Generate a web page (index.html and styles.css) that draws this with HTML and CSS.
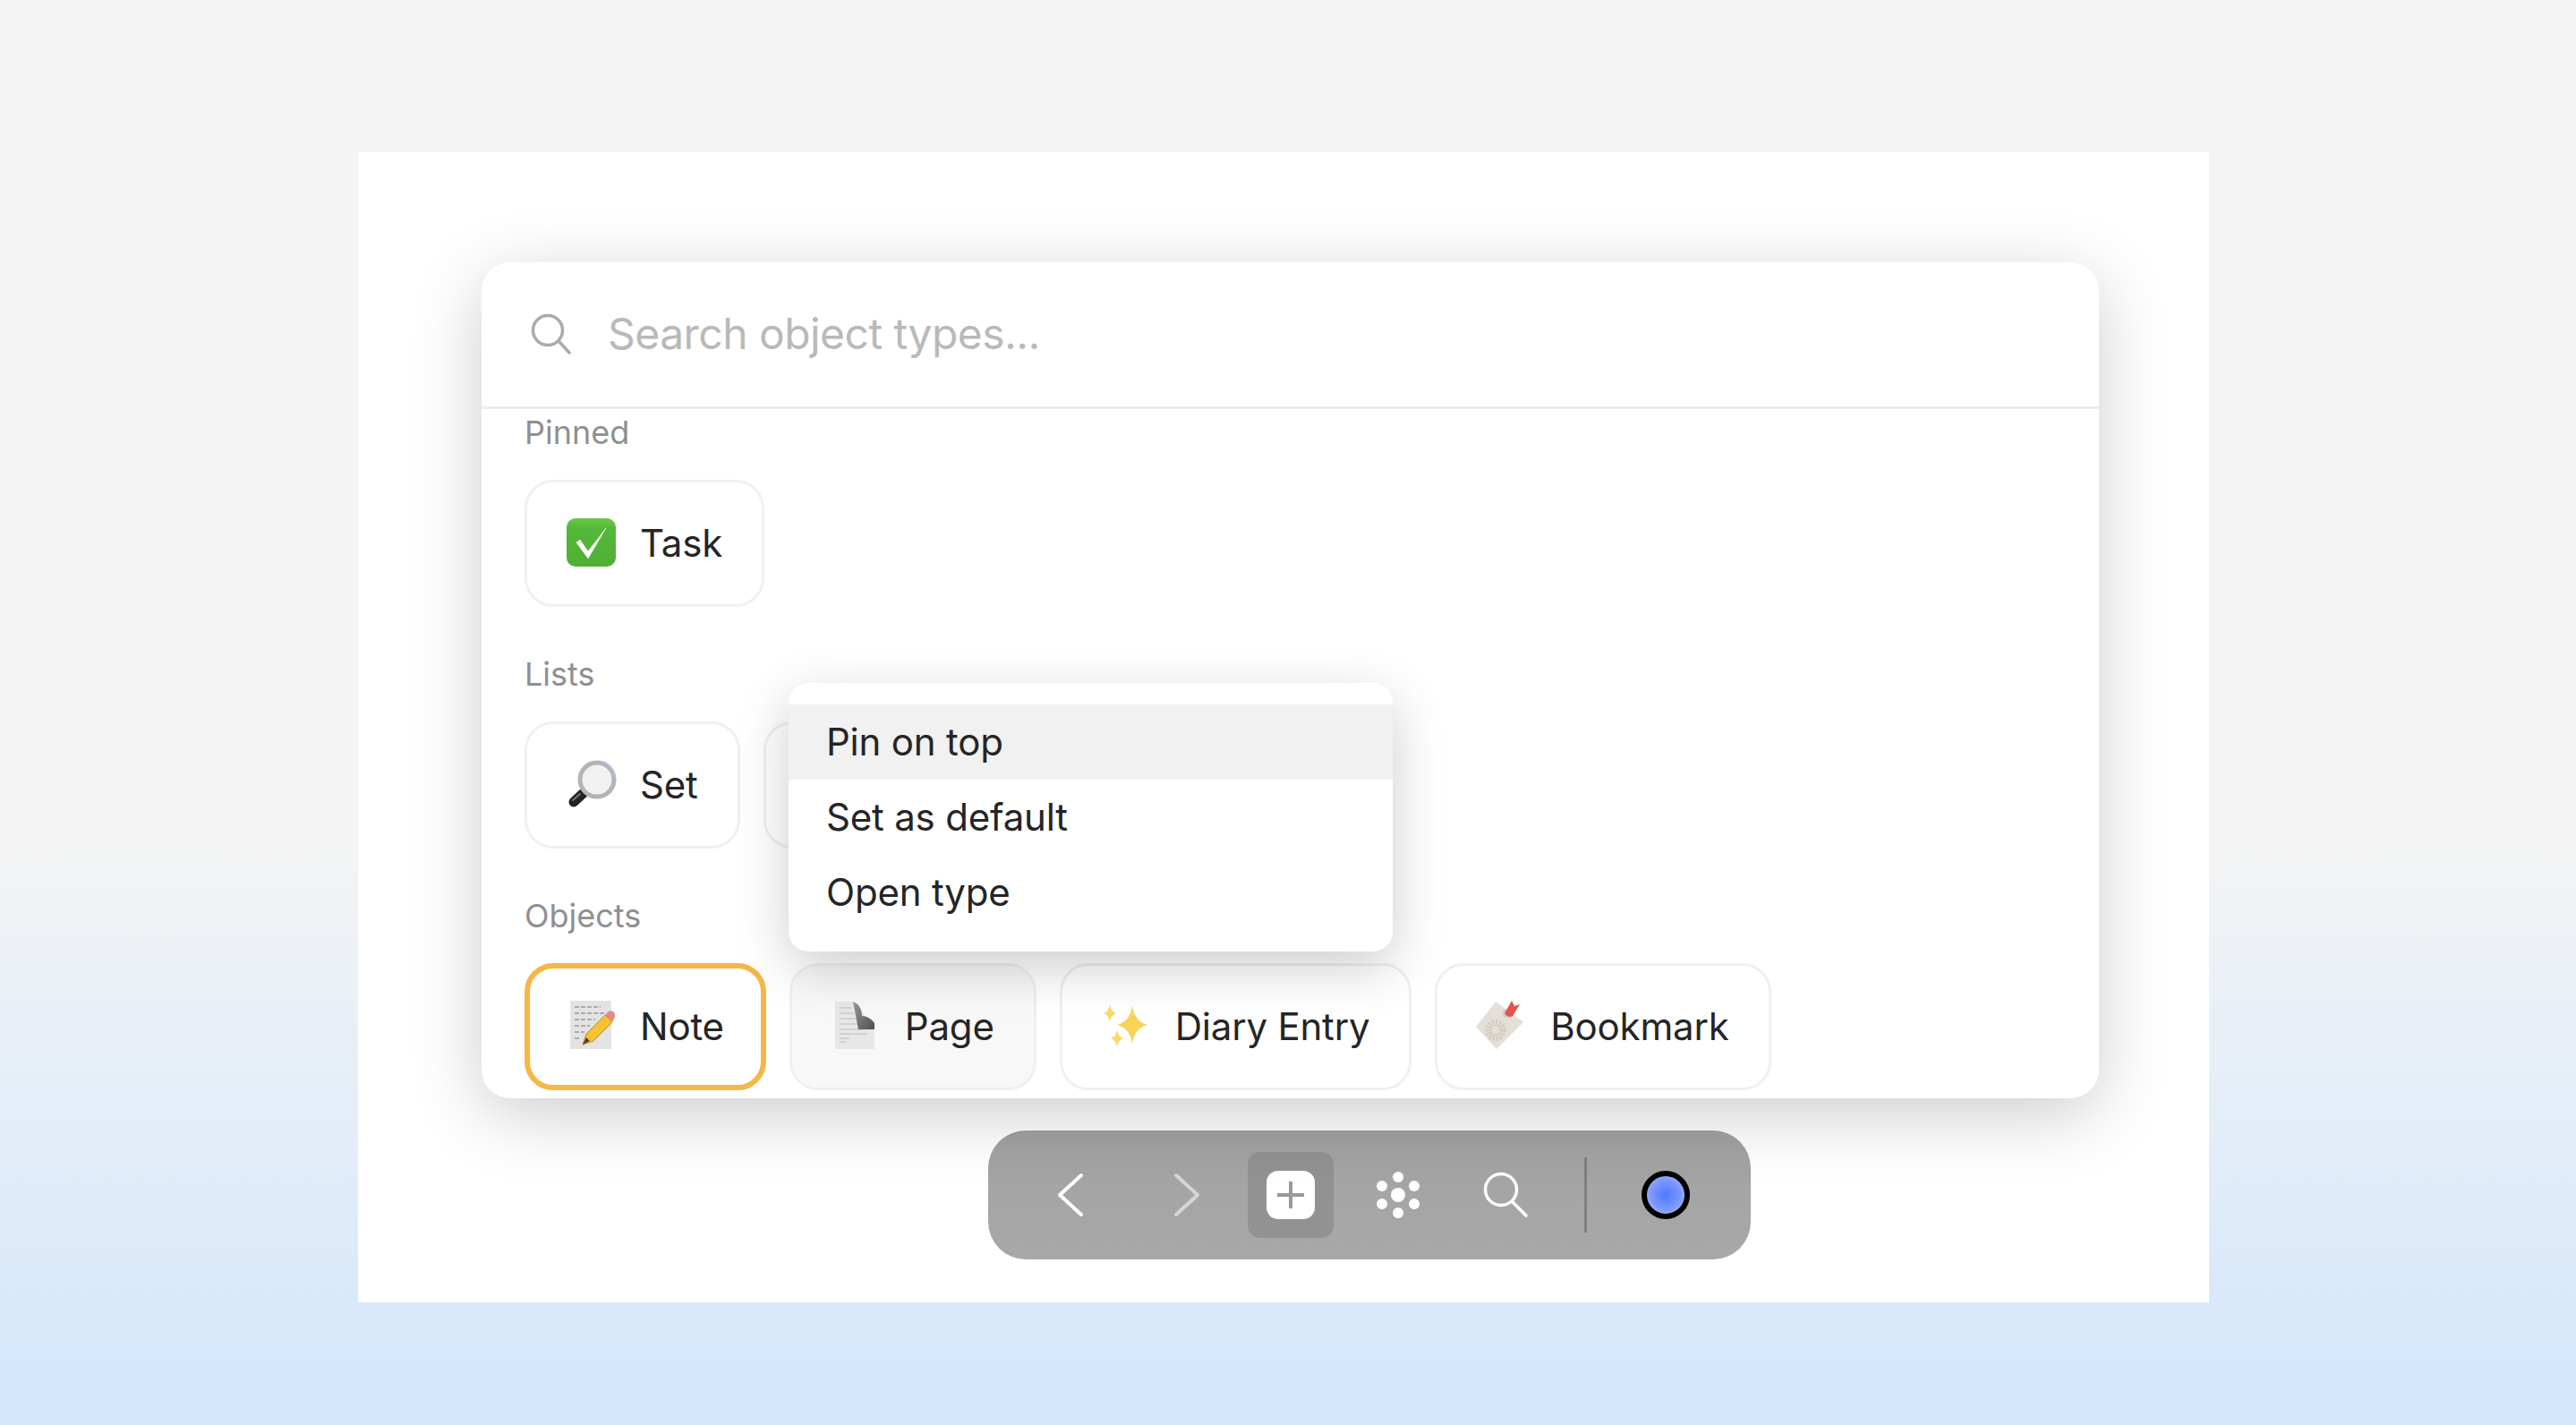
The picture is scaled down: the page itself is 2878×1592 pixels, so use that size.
FILE: index.html
```html
<!DOCTYPE html>
<html lang="en">
<head>
    <meta charset="UTF-8">
    <meta name="viewport" content="width=device-width, initial-scale=1.0">
    <title>Object types</title>
    <link rel="stylesheet" href="styles.css">
</head>
<body>
    <div class="frame">
        <div class="card">
            <!-- Search -->
            <div class="search">
                <svg class="search-icon" width="46" height="46" viewBox="0 0 46 46">
                    <circle cx="20" cy="19" r="16.5" fill="none" stroke="#ababab" stroke-width="3.5"/>
                    <path d="M32 31 L44 44" stroke="#ababab" stroke-width="3.5" stroke-linecap="round"/>
                </svg>
                <span class="search-text">Search object types...</span>
            </div>

            <div class="types">
                <div class="label">Pinned</div>
                <div class="row">
                    <div class="pill">
                        <svg class="emoji" viewBox="0 0 58 58">
                            <defs>
                                <linearGradient id="checkBg" x1="0" y1="0" x2="0" y2="1">
                                    <stop offset="0" stop-color="#6cc64c"/>
                                    <stop offset="0.2" stop-color="#54b838"/>
                                    <stop offset="1" stop-color="#4fb034"/>
                                </linearGradient>
                            </defs>
                            <rect x="2" y="2" width="55" height="54" rx="10" fill="url(#checkBg)"/>
                            <path d="M13 29 L17 26 L26 39 L46 13 L26 47 Z" fill="#fff" stroke="#fff" stroke-width="0.5" stroke-linejoin="round"/>
                        </svg>
                        <span>Task</span>
                    </div>
                </div>

                <div class="label">Lists</div>
                <div class="row">
                    <div class="pill">
                        <svg class="emoji" viewBox="0 0 58 58">
                            <path d="M24 36 L10 49" stroke="#222" stroke-width="11" stroke-linecap="round"/>
                            <path d="M9 47 L17 40" stroke="#777" stroke-width="2" stroke-linecap="round"/>
                            <circle cx="36" cy="24" r="19" fill="#f1f1f1" stroke="#b4b4b4" stroke-width="5"/>
                            <path d="M42 4 A21 21 0 0 1 56 22" fill="none" stroke="#a9bfe6" stroke-width="2"/>
                        </svg>
                        <span>Set</span>
                    </div>
                    <div class="pill pill-hidden"></div>
                </div>

                <div class="label">Objects</div>
                <div class="row">
                    <div class="pill pill-selected">
                        <svg class="emoji" viewBox="0 0 58 58">
                            <rect x="6" y="1" width="46" height="54" fill="#e3e3e3"/>
                            <path d="M11 8 H40 M11 15 H44 M11 22 H34 M11 29 H28 M11 36 H22 M11 43 H18" stroke="#9a9a9a" stroke-width="1.6" stroke-dasharray="5 2"/>
                            <path d="M20 50 L24 38 L45 17 L53 25 L32 46 Z" fill="#f4c232" stroke="#c8901c" stroke-width="1"/>
                            <path d="M20 50 L24 42 L28 46 Z" fill="#4a4034"/>
                            <path d="M45 17 L49 13 Q52 11 55 14 Q57 17 55 21 L53 25 Z" fill="#e58a80"/>
                        </svg>
                        <span>Note</span>
                    </div>
                    <div class="pill pill-hover">
                        <svg class="emoji" viewBox="0 0 58 58">
                            <defs>
                                <linearGradient id="foldBg" x1="0" y1="0" x2="1" y2="1">
                                    <stop offset="0" stop-color="#9a9a9a"/>
                                    <stop offset="1" stop-color="#505050"/>
                                </linearGradient>
                            </defs>
                            <path d="M6 2 H28 L50 32 V55 H6 Z" fill="#e7e7e7"/>
                            <path d="M11 9 H24 M11 15 H27 M11 21 H30 M11 27 H32 M11 33 H40 M11 38 H42 M11 43 H22 M11 47 H18" stroke="#cbcbcb" stroke-width="1.6"/>
                            <path d="M26 2 Q36 6 36 18 Q44 18 50 26 V33 H32 Z" fill="url(#foldBg)"/>
                        </svg>
                        <span>Page</span>
                    </div>
                    <div class="pill">
                        <svg class="emoji" viewBox="0 0 58 58">
                            <path d="M36 6 Q38 24 53 28 Q38 32 36 50 Q34 32 19 28 Q34 24 36 6 Z" fill="#f8d458"/>
                            <path d="M11 5 Q12 13 18 15 Q12 17 11 25 Q10 17 4 15 Q10 13 11 5 Z" fill="#f9d968"/>
                            <path d="M19 33 Q20 41 26 43 Q20 45 19 53 Q18 45 12 43 Q18 41 19 33 Z" fill="#f9d968"/>
                        </svg>
                        <span>Diary Entry</span>
                    </div>
                    <div class="pill">
                        <svg class="emoji" viewBox="0 0 58 58">
                            <path d="M23 2 L54 25 L24 55 L1 30 Z" fill="#e4e0d9"/>
                            <circle cx="23" cy="34" r="8" fill="none" stroke="#d2cdc3" stroke-width="8" stroke-dasharray="2 1.4"/>
                            <circle cx="36" cy="15" r="5" fill="#cfcac2"/>
                            <path d="M33 15 L41 1 L44 7 L50 5 L42 18 Q37 21 33 15 Z" fill="#e4534c"/>
                        </svg>
                        <span>Bookmark</span>
                    </div>
                </div>
            </div>

            <!-- Context menu of the hovered type -->
            <div class="menu">
                <div class="menu-item active">Pin on top</div>
                <div class="menu-item">Set as default</div>
                <div class="menu-item">Open type</div>
            </div>
        </div>

        <div class="toolbar">
            <div class="tool tool-back">
                <svg width="30" height="50" viewBox="0 0 30 50">
                    <path d="M27 3 L3 25 L27 47" fill="none" stroke="#fff" stroke-width="4" stroke-linecap="round" stroke-linejoin="round"/>
                </svg>
            </div>
            <div class="tool tool-forward">
                <svg width="30" height="50" viewBox="0 0 30 50">
                    <path d="M3 3 L27 25 L3 47" fill="none" stroke="#d6d6d6" stroke-width="4" stroke-linecap="round" stroke-linejoin="round"/>
                </svg>
            </div>
            <div class="tool tool-active">
                <div class="plus-box">
                    <svg width="32" height="32" viewBox="0 0 32 32">
                        <path d="M16 1 V31 M1 16 H31" stroke="#9a9a9a" stroke-width="4"/>
                    </svg>
                </div>
            </div>
            <div class="tool">
                <svg width="52" height="52" viewBox="0 0 52 52" fill="#fff">
                    <circle cx="26" cy="26" r="8"/>
                    <circle cx="26" cy="6" r="6"/>
                    <circle cx="26" cy="46" r="6"/>
                    <circle cx="8" cy="16" r="6"/>
                    <circle cx="44" cy="16" r="6"/>
                    <circle cx="8" cy="36" r="6"/>
                    <circle cx="44" cy="36" r="6"/>
                </svg>
            </div>
            <div class="tool">
                <svg width="52" height="52" viewBox="0 0 52 52">
                    <circle cx="21" cy="20" r="17.5" fill="none" stroke="#fff" stroke-width="3.5"/>
                    <path d="M33 33 L49 49" stroke="#fff" stroke-width="3.5" stroke-linecap="round"/>
                </svg>
            </div>
            <div class="divider"></div>
            <div class="tool">
                <div class="avatar"></div>
            </div>
        </div>
    </div>
</body>
</html>
```

FILE: styles.css
```css
* {
    box-sizing: border-box;
}

html, body {
    margin: 0;
    height: 100%;
}

body {
    font-family: Inter, "Liberation Sans", sans-serif;
    background: linear-gradient(180deg, #f4f4f4 0%, #f4f4f4 58%, #d2e6fc 100%);
    padding: 170px 410px 137px 400px;
    overflow: hidden;
}

.frame {
    background: #fff;
    height: 1285px;
    padding: 123px 0 0 138px;
}

.card {
    position: relative;
    width: 1807px;
    height: 934px;
    background: #fff;
    border-radius: 32px;
    box-shadow: 0 18px 80px rgba(0, 0, 0, 0.2);
}

.search {
    display: flex;
    align-items: center;
    height: 164px;
    padding: 0 0 2px 54px;
    border-bottom: 3px solid #ececec;
}

.search-icon {
    margin-right: 41px;
}

.search-text {
    font-size: 48px;
    letter-spacing: -0.55px;
    color: #b9b9b9;
}

.types {
    padding: 0 48px;
}

.label {
    font-size: 36px;
    line-height: 52px;
    color: #8f8f8f;
}

.row {
    display: flex;
    gap: 26px;
    margin: 27px 0 49px;
}

.pill {
    display: flex;
    align-items: center;
    gap: 26px;
    height: 142px;
    padding: 0 44px 2px 42px;
    border: 3px solid #f0f0f0;
    border-radius: 32px;
    background: #fff;
    font-size: 42px;
    font-weight: 420;
    letter-spacing: -0.2px;
    color: #252525;
}

.pill-hidden {
    width: 300px;
}

.pill-hover {
    background: #f8f8f8;
}

.pill-selected {
    border: 6px solid #f5b748;
    padding: 0 41px 2px 39px;
}

.emoji {
    width: 58px;
    height: 58px;
    flex: none;
}

.menu {
    position: absolute;
    left: 343px;
    top: 470px;
    width: 675px;
    height: 300px;
    padding: 24px 0;
    background: #fff;
    border-radius: 22px;
    box-shadow: 0 18px 60px rgba(0, 0, 0, 0.2);
}

.menu-item {
    height: 84px;
    line-height: 84px;
    padding-left: 42px;
    font-size: 42px;
    letter-spacing: -0.2px;
    color: #252525;
}

.menu-item.active {
    background: #f1f1f1;
}

.toolbar {
    display: flex;
    align-items: center;
    width: 852px;
    height: 144px;
    margin: 36px 0 0 566px;
    padding-left: 44px;
    border-radius: 42px;
    background: linear-gradient(180deg, #a2a2a2, #a8a8a8);
}

.tool {
    display: flex;
    align-items: center;
    justify-content: center;
    width: 96px;
    height: 96px;
    margin-right: 24px;
}

.tool-back {
    margin-right: 34px;
}

.tool-forward {
    margin-right: 20px;
}

.tool-active {
    background: #929292;
    border-radius: 14px;
}

.plus-box {
    display: flex;
    align-items: center;
    justify-content: center;
    width: 54px;
    height: 54px;
    background: #fff;
    border-radius: 13px;
}

.divider {
    width: 3px;
    height: 84px;
    margin: 0 40px 0 16px;
    background: #7f7f7f;
}

.avatar {
    width: 54px;
    height: 54px;
    border: 6px solid #000;
    border-radius: 50%;
    background: radial-gradient(circle, #4f78ff 0%, #7b98fb 55%, #c6d2fb 100%);
}
```
